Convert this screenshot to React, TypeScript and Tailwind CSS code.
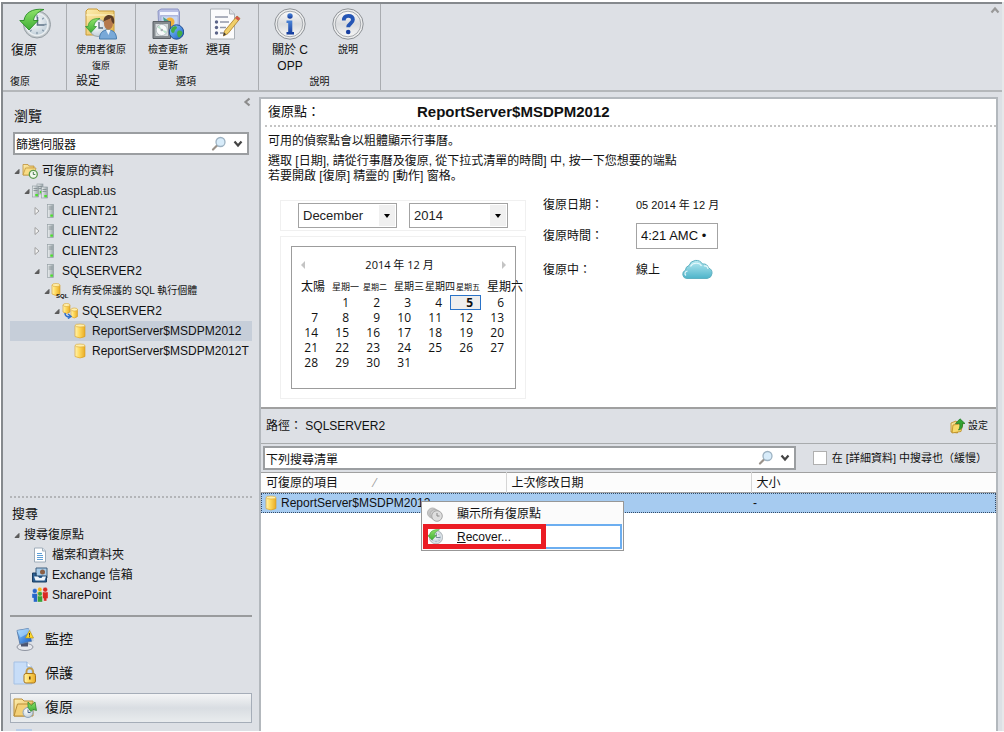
import React, { useState } from "react";

type IconProps = { className?: string };

function Defs() {
  return (
    <svg className="absolute h-0 w-0" aria-hidden="true">
      <defs>
        <linearGradient id="gold" x1="0" x2="1" y1="0" y2="0">
          <stop offset="0" stopColor="#fff3b4" />
          <stop offset="0.4" stopColor="#ffdc62" />
          <stop offset="1" stopColor="#e9ac26" />
        </linearGradient>
        <linearGradient id="folder" x1="0" x2="1" y1="0" y2="1">
          <stop offset="0" stopColor="#fdeeb0" />
          <stop offset="1" stopColor="#e2b248" />
        </linearGradient>
        <linearGradient id="green" x1="0" x2="0" y1="0" y2="1">
          <stop offset="0" stopColor="#8fe36a" />
          <stop offset="1" stopColor="#3fae36" />
        </linearGradient>
        <radialGradient id="face" cx="0.4" cy="0.35" r="0.7">
          <stop offset="0" stopColor="#ffffff" />
          <stop offset="1" stopColor="#bccbd6" />
        </radialGradient>
        <linearGradient id="disc" x1="0" x2="0" y1="0" y2="1">
          <stop offset="0" stopColor="#fbfbfb" />
          <stop offset="0.5" stopColor="#d9dbdd" />
          <stop offset="1" stopColor="#f7f7f7" />
        </linearGradient>
        <linearGradient id="blue" x1="0" x2="0" y1="0" y2="1">
          <stop offset="0" stopColor="#4c86d8" />
          <stop offset="1" stopColor="#12399b" />
        </linearGradient>
        <linearGradient id="screen" x1="0" x2="1" y1="0" y2="1">
          <stop offset="0" stopColor="#8fd0ff" />
          <stop offset="1" stopColor="#1458c4" />
        </linearGradient>
        <linearGradient id="steel" x1="0" x2="1" y1="0" y2="0">
          <stop offset="0" stopColor="#eef1f2" />
          <stop offset="1" stopColor="#98a3a8" />
        </linearGradient>
        <linearGradient id="sky" x1="0" x2="0" y1="0" y2="1">
          <stop offset="0" stopColor="#b9eaf2" />
          <stop offset="1" stopColor="#4db4ca" />
        </linearGradient>
      </defs>
    </svg>
  );
}

function ClockRestore({ className = "size-8" }: IconProps) {
  return (
    <svg viewBox="0 0 32 32" className={className} aria-hidden="true">
      <circle cx="18" cy="16.5" r="13.5" fill="#c3c9cd" stroke="#979fa5" />
      <circle cx="18" cy="16.5" r="11" fill="url(#face)" stroke="#e9eef1" strokeWidth="1.5" />
      <g stroke="#7f93a4" strokeWidth="1.3" strokeLinecap="round">
        <path d="M18 7.500v1.500M18 24.500v1M26 16.500h1M11.500 23l.7-.7M24.300 22.800l-.7-.7M24.300 10.200l-.7.7" />
        <path d="M18.500 9.500v7.500h6.500" fill="none" stroke="#5d7387" strokeWidth="1.600" />
      </g>
      <path d="M25 1.500C13 0 6 5 5 12.500H.8L10 22l9-9.500h-4.500C15 8 18 4 25 1.500z" fill="url(#green)" stroke="#2a8a28" strokeWidth=".9" />
    </svg>
  );
}

function UserFolder() {
  return (
    <svg viewBox="0 0 32 32" className="size-8" aria-hidden="true">
      <path d="M1 3l2-2h9l2 2h15v24H1z" fill="url(#folder)" stroke="#c99a35" />
      <path d="M1 7h28" stroke="#fff6cf" />
      <circle cx="13" cy="20" r="8.500" fill="url(#face)" stroke="#9ca7ae" />
      <path d="M14 14v6h4" fill="none" stroke="#54687a" strokeWidth="1.3" />
      <path d="M15 10.500C8 10 3.500 13 3 18.500H.5L6 24.500l5.500-6H9c.3-3.500 2-6 6-8z" fill="url(#green)" stroke="#2d8e2b" strokeWidth=".7" />
      <path d="M14.500 31c0-6 3-9 8.500-9s8.500 3 8.500 9z" fill="#79a9d8" stroke="#487cae" />
      <path d="M21 22l2.500 5 2-5z" fill="#eef5fb" />
      <ellipse cx="23.500" cy="15.500" rx="4.500" ry="6" fill="#b5784b" />
      <path d="M18.500 14c0-5 2.500-7 5.500-7 4 0 6 3 5 9-2-1-3-4-3-6-2 2-5 1-7.500 4z" fill="#5b3c28" />
    </svg>
  );
}

function CheckUpdates() {
  return (
    <svg viewBox="0 0 32 32" className="size-8" aria-hidden="true">
      <path d="M6 3l3-2h17l1.500 3v21H7z" fill="#b8bfe4" stroke="#8d95c4" />
      <path d="M8 4h18v3H8z" fill="#f4f6ff" />
      <path d="M9 8h17v14H9z" fill="#c8d6f2" stroke="#9aa5d2" strokeWidth=".6" />
      <circle cx="18" cy="14" r="4.500" fill="#f0b13c" />
      <path d="M11 9l6 4-4 5z" fill="#4aa08c" />
      <path d="M1 13.500h17.500v17H1z" fill="#858b90" stroke="#5a6065" />
      <path d="M3.500 16h12.500v12H3.500z" fill="#d5dadc" />
      <circle cx="9.800" cy="22" r="5.600" fill="#f7f9fa" stroke="#b5bdc2" />
      <path d="M9.800 22l-4.500-2.500 2-2zM9.800 22l3.500 3.500 1.500-2.500z" fill="#b9e3c9" />
      <circle cx="9.800" cy="22" r="1.300" fill="#a5adb2" />
      <circle cx="24.500" cy="24" r="7.200" fill="url(#screen)" stroke="#1d4a93" />
      <path d="M19.500 20c2-2.500 5.500-2 5.500-.5s-2.500 2-2.500 4-3.500 2-3.500-1zM26 23c2-1 4.500 0 4.500 2s-2.500 4.500-3.500 4.500-3-4.500-1-6.500z" fill="#43ad45" />
    </svg>
  );
}

function OptionsDoc() {
  return (
    <svg viewBox="0 0 32 32" className="size-8" aria-hidden="true">
      <path d="M1.500 1h19l5 5v25h-24z" fill="#fbfbfc" stroke="#aab0b6" />
      <path d="M20.500 1v5h5" fill="#dde1e5" stroke="#aab0b6" />
      <g fill="#5b6488">
        <circle cx="7.500" cy="14" r="1.700" />
        <circle cx="7.500" cy="19.500" r="1.700" />
        <circle cx="7.500" cy="25" r="1.700" />
      </g>
      <path d="M6 9h13M11 14h9M11 19.500h6M11 25h4" stroke="#9298a8" strokeWidth="1.500" />
      <path d="M28 8l3 2.500L19 25.500l-4.500 2.500 1-5z" fill="#f0cf6a" stroke="#a87a23" strokeWidth=".8" />
      <path d="M28 8l3 2.500-1.800 2.200-3-2.500z" fill="#d4574c" />
      <path d="M15 24.500l-.8 3.500 3-1.700z" fill="#3f3b36" />
    </svg>
  );
}

function RoundGlyph({ kind }: { kind: "info" | "help" }) {
  return (
    <svg viewBox="0 0 32 32" className="size-8" aria-hidden="true">
      <circle cx="16" cy="16" r="15.200" fill="#eceded" stroke="#8d9196" />
      <circle cx="16" cy="16" r="12.800" fill="url(#disc)" stroke="#a6aaae" />
      {kind === "info" ? (
        <>
          <circle cx="16" cy="8" r="2.700" fill="url(#blue)" />
          <path d="M12.500 12.500h5.800v11.500h1.700v2.500h-7.500V24h1.700v-9h-1.700z" fill="url(#blue)" />
        </>
      ) : (
        <>
          <path d="M11.800 12.500c0-3.200 1.900-4.700 4.500-4.700 2.800 0 4.600 1.500 4.600 4 0 3.700-4.700 3.700-4.700 7.500" fill="none" stroke="#2556b5" strokeWidth="3.800" />
          <circle cx="16.200" cy="24" r="2.300" fill="#173fa0" />
        </>
      )}
    </svg>
  );
}

function Magnifier() {
  return (
    <svg viewBox="0 0 16 16" className="size-4 shrink-0" aria-hidden="true">
      <path d="M6 9.500L2 13.500" stroke="#9a928a" strokeWidth="2.200" strokeLinecap="round" />
      <circle cx="9.500" cy="6" r="4.500" fill="#d8ecfa" stroke="#9db2c2" strokeWidth="1.300" />
    </svg>
  );
}

function Chevron({ className = "" }: IconProps) {
  return (
    <svg viewBox="0 0 10 8" className={"h-2 w-2.5 shrink-0 " + className} aria-hidden="true">
      <path d="M1.500 1.500L5 5.500l3.500-4" fill="none" stroke="currentColor" strokeWidth="2.200" />
    </svg>
  );
}

function FolderClock() {
  return (
    <svg viewBox="0 0 16 16" className="size-4" aria-hidden="true">
      <path d="M1 1.500h5l1 1.500h5v9H1z" fill="url(#folder)" stroke="#bf9238" strokeWidth=".8" />
      <path d="M3.500 5H14l-2 7H1z" fill="#f8dc86" stroke="#bf9238" strokeWidth=".7" />
      <circle cx="11.300" cy="11.300" r="4" fill="#f1f7ef" stroke="#5a9a4b" strokeWidth="1.300" />
      <path d="M11.300 9v2.500h2" fill="none" stroke="#4b7c50" />
    </svg>
  );
}

function ServerShape({ x, y, h }: { x: number; y: number; h: number }) {
  return (
    <g>
      <rect x={x} y={y} width="6" height={h} fill="url(#steel)" stroke="#8d989d" strokeWidth=".6" />
      <path d={`M${x + 1} ${y + 2.5}h4M${x + 1} ${y + 4.5}h4`} stroke="#7d888d" strokeWidth=".8" />
      <rect x={x + 2.8} y={y + h - 3} width="2.600" height="2.200" fill="#4be02b" />
    </g>
  );
}

function ServerIcon() {
  return (
    <svg viewBox="0 0 16 16" className="size-4" aria-hidden="true">
      <ServerShape x={5.5} y={1.5} h={13} />
    </svg>
  );
}

function DomainIcon() {
  return (
    <svg viewBox="0 0 16 16" className="size-4" aria-hidden="true">
      <ServerShape x={5} y={1} h={10} />
      <ServerShape x={0.5} y={3} h={11} />
      <ServerShape x={9.5} y={4} h={11} />
    </svg>
  );
}

function Cylinder({ x, y, w, h }: { x: number; y: number; w: number; h: number }) {
  return (
    <g>
      <path d={`M${x} ${y + 1.5}v${h - 3}q${w / 2} 3 ${w} 0v-${h - 3}z`} fill="url(#gold)" stroke="#d39a22" strokeWidth=".6" />
      <ellipse cx={x + w / 2} cy={y + 1.5} rx={w / 2} ry="1.500" fill="#fff0ae" stroke="#d9a430" strokeWidth=".6" />
    </g>
  );
}

function DbIcon() {
  return (
    <svg viewBox="0 0 16 16" className="size-4" aria-hidden="true">
      <Cylinder x={3} y={1} w={10} h={14} />
    </svg>
  );
}

function SqlIcon() {
  return (
    <svg viewBox="0 0 16 16" className="size-4 overflow-visible" aria-hidden="true">
      <Cylinder x={0} y={0.5} w={8} h={12} />
      <text x="4" y="15" fontSize="6" fontWeight="bold" fontFamily="Liberation Sans" fill="#111">SQL</text>
    </svg>
  );
}

function DbPairIcon() {
  return (
    <svg viewBox="0 0 16 16" className="size-4" aria-hidden="true">
      <Cylinder x={1} y={0.5} w={7} h={10} />
      <Cylinder x={9} y={5} w={6.5} h={10} />
      <path d="M3 10c0 3 2 4 5 4M6 11l3 2.500-3 2" fill="none" stroke="#2d6fce" strokeWidth="1.500" />
    </svg>
  );
}

function FileIcon() {
  return (
    <svg viewBox="0 0 16 16" className="size-4" aria-hidden="true">
      <path d="M2.500 1h8l3 3v11h-11z" fill="#fff" stroke="#9eacb9" />
      <path d="M10.500 1v3h3" fill="#dbe7f1" stroke="#9eacb9" />
      <path d="M5 6.500h5M5 8.500h6M5 10.500h6M5 12.500h6" stroke="#5f9fd6" />
    </svg>
  );
}

function MailboxIcon() {
  return (
    <svg viewBox="0 0 16 16" className="size-4" aria-hidden="true">
      <path d="M4 1h11v10H4z" fill="#a9cdea" stroke="#41617e" />
      <circle cx="10.500" cy="5" r="2.500" fill="#8b5e43" />
      <path d="M7 11c0-3 7-3 7 0z" fill="#3a6ba6" />
      <path d="M.5 6h3.500v3h10.500v6H.5z" fill="#2b5f93" stroke="#1b3e63" />
      <path d="M2 9.500h4l1.500 1.500h2l1-1.500h3.500l-1.500 4h-9z" fill="#eef4fa" />
    </svg>
  );
}

function SharePointIcon() {
  return (
    <svg viewBox="0 0 16 16" className="size-4" aria-hidden="true">
      <g stroke="#fff" strokeWidth=".3">
        <path d="M5 4.500h5v7H5z" fill="#f2b21b" />
        <circle cx="7.800" cy="2.400" r="2.200" fill="#f2b21b" />
        <path d="M10.500 5H16v6.500h-1.300V14h-3v-2.500h-1.200z" fill="#d92a23" />
        <circle cx="13.200" cy="2.700" r="2.400" fill="#d92a23" />
        <path d="M0 6.500h5.500v8.500H1.500v-4H0z" fill="#2766c9" />
        <circle cx="2.800" cy="4" r="2.400" fill="#2766c9" />
        <path d="M5.500 9h5v6h-5z" fill="#3aa23a" />
        <circle cx="8" cy="6.800" r="2.300" fill="#3aa23a" />
      </g>
    </svg>
  );
}

function MonitorNav() {
  return (
    <svg viewBox="0 0 24 24" className="size-6" aria-hidden="true">
      <ellipse cx="12" cy="20" rx="8" ry="3.500" fill="#e4e6ec" stroke="#8f94a0" />
      <path d="M8 15h7v4.500H8z" fill="#4c5470" />
      <path d="M4 3.500L15.500 1.500 19 14 7 17z" fill="url(#screen)" stroke="#5b7fae" />
      <path d="M4 3.500L15.500 1.500l1 4-9 5z" fill="#b7e0ff" opacity=".6" />
      <path d="M15.500 1.500l2 .8L21 14l-2 .5z" fill="#c3d0de" />
      <path d="M16.500 3.500L20.500 11h-8z" fill="#ffd92e" stroke="#b48a00" strokeWidth=".6" />
      <path d="M16.500 6v2.600M16.500 9.300v.8" stroke="#222" strokeWidth=".9" />
    </svg>
  );
}

function ProtectNav() {
  return (
    <svg viewBox="0 0 24 24" className="size-6" aria-hidden="true">
      <path d="M1 1h13l5 5v17H1z" fill="#c7ddf8" stroke="#a5c1e4" />
      <path d="M14 1v5h5" fill="#fff" stroke="#8eb0da" />
      <path d="M13.500 13v-2.500a3.300 3.300 0 016.600 0V13" fill="none" stroke="#c39a45" strokeWidth="1.900" />
      <rect x="11" y="12.500" width="11.500" height="9.500" rx="2" fill="url(#gold)" stroke="#a9751b" />
      <path d="M16.800 15.500v3" stroke="#6a4510" strokeWidth="1.600" />
    </svg>
  );
}

function RecoverNav() {
  return (
    <svg viewBox="0 0 24 24" className="size-6" aria-hidden="true">
      <path d="M1 4h8l2 2h9v15H1z" fill="url(#folder)" stroke="#b98e38" />
      <path d="M4.500 9H20l-3.500 12H1z" fill="#f3d078" stroke="#b98e38" />
      <circle cx="15" cy="17.500" r="5" fill="url(#face)" stroke="#8ea4bd" />
      <path d="M15 14.500v3h2.500" fill="none" stroke="#48648a" />
      <path d="M15 7l3 3.500L22 7l1.500 8.500-3.500-1-2 2-3-4z" fill="url(#green)" stroke="#257f25" strokeWidth=".7" />
    </svg>
  );
}

function FolderUp() {
  return (
    <svg viewBox="0 0 16 16" className="size-4" aria-hidden="true">
      <path d="M1 5l5-2 1.500 1.500V15L1 14z" fill="url(#folder)" stroke="#b78a25" strokeWidth=".8" />
      <path d="M3 7l10-1.500-2 8L2 15z" fill="#f8da6b" stroke="#b78a25" strokeWidth=".8" />
      <path d="M10 .8L15 5.500h-2.500c.3 4-1 6-4 6.500 1.500-2 1.500-4 1.200-6.500H5.500z" fill="#35a332" stroke="#1c7421" strokeWidth=".7" />
    </svg>
  );
}

function PointsIcon() {
  return (
    <svg viewBox="0 0 16 16" className="size-4" aria-hidden="true">
      <circle cx="5.500" cy="7" r="5" fill="#c8c8c8" stroke="#b5b5b5" />
      <circle cx="8" cy="8.500" r="5" fill="#d0d0d0" stroke="#b0b0b0" />
      <circle cx="10" cy="10" r="5.300" fill="#dedede" stroke="#a5a5a5" />
      <path d="M10 7v3h2.500" fill="none" stroke="#888" />
    </svg>
  );
}

function Cloud() {
  return (
    <svg viewBox="0 0 34 22" className="h-[22px] w-[34px]" aria-hidden="true">
      <path d="M7 19.500h20a5.500 5.500 0 001.500-10.600A5.500 5.500 0 0022.500 5 7.500 7.500 0 009 6.500a5 5 0 00-3.500 4.700A4.300 4.300 0 007 19.500z" fill="url(#sky)" stroke="#5fb1c1" />
      <path d="M6 16.500c-2-1.500-1-4 1.500-4.500M10.500 7.500c2-4 9-4.500 11-.5M24 7c3-.5 4 1.500 4 3" fill="none" stroke="#e5f8fb" strokeWidth="1.200" />
    </svg>
  );
}

function RibbonItem({ icon, lines, size = "text-[10px]", width, align = "items-center" }: {
  icon: React.ReactNode; lines: { text: string; size?: string }[]; size?: string; width: string; align?: string;
}) {
  return (
    <button type="button" className={"flex flex-col whitespace-nowrap " + width + " " + align}>
      <span className="self-center">{icon}</span>
      <span className={"mt-0.5 flex flex-col items-center leading-4 " + size}>
        {lines.map((l) => (
          <span key={l.text} className={"leading-4 " + (l.size ?? "")}>{l.text}</span>
        ))}
      </span>
    </button>
  );
}

function RibbonGroup({ caption, captionClass, width, children }: {
  caption: string; captionClass: string; width: string; children: React.ReactNode;
}) {
  return (
    <section className={"flex flex-col border-r border-[#a9acb0] pt-1 " + width}>
      <div className="flex h-[66px]">{children}</div>
      <h2 className={"leading-[15px] " + captionClass}>{caption}</h2>
    </section>
  );
}

const indent = ["pl-0.5", "pl-3", "pl-[22px]", "pl-8", "pl-[42px]", "pl-[52px]"];

type Node = { level: number; label: string; icon?: React.ReactNode; state?: "open" | "closed"; small?: boolean };

const tree: Node[] = [
  { level: 0, label: "可復原的資料", icon: <FolderClock />, state: "open" },
  { level: 1, label: "CaspLab.us", icon: <DomainIcon />, state: "open" },
  { level: 2, label: "CLIENT21", icon: <ServerIcon />, state: "closed" },
  { level: 2, label: "CLIENT22", icon: <ServerIcon />, state: "closed" },
  { level: 2, label: "CLIENT23", icon: <ServerIcon />, state: "closed" },
  { level: 2, label: "SQLSERVER2", icon: <ServerIcon />, state: "open" },
  { level: 3, label: "所有受保護的 SQL 執行個體", icon: <SqlIcon />, state: "open", small: true },
  { level: 4, label: "SQLSERVER2", icon: <DbPairIcon />, state: "open" },
  { level: 5, label: "ReportServer$MSDPM2012", icon: <DbIcon /> },
  { level: 5, label: "ReportServer$MSDPM2012T", icon: <DbIcon /> },
];

const searches: Node[] = [
  { level: 0, label: "搜尋復原點", state: "open" },
  { level: 1, label: "檔案和資料夾", icon: <FileIcon /> },
  { level: 1, label: "Exchange 信箱", icon: <MailboxIcon /> },
  { level: 1, label: "SharePoint", icon: <SharePointIcon /> },
];

function TreeRow({ node, selected, onSelect }: { node: Node; selected?: boolean; onSelect?: () => void }) {
  return (
    <li>
      <button
        type="button"
        onClick={onSelect}
        className={"flex h-5 w-full items-center whitespace-nowrap text-left " + indent[node.level] + (selected ? " bg-[#c6ced9]" : "") + (node.small ? " text-[10px]" : "")}
      >
        <svg viewBox="0 0 10 10" className="size-2.5 shrink-0" aria-hidden="true">
          {node.state === "open" && <path d="M7 3.500v4H3z" fill="#5a5a5a" stroke="#5a5a5a" />}
          {node.state === "closed" && <path d="M3 1.500L7 5 3 8.500z" fill="#f4f4f4" stroke="#a0a0a0" />}
        </svg>
        {node.icon && <span className="mr-1 shrink-0">{node.icon}</span>}
        <span className={node.icon ? "" : "ml-0.5"}>{node.label}</span>
      </button>
    </li>
  );
}

function SearchField({ label, id, className = "" }: { label: string; id: string; className?: string }) {
  return (
    <div className={"flex items-center border-2 border-[#9b9ea1] bg-white pr-1 " + className}>
      <input id={id} aria-label={label} defaultValue={label} className="h-full min-w-0 flex-1 px-px text-xs outline-none" />
      <Magnifier />
      <Chevron className="ml-1.5 text-[#444]" />
    </div>
  );
}

function Combo({ label, options }: { label: string; options: string[] }) {
  return (
    <div className="relative h-[25px] w-[99px]">
      <select aria-label={label} className="h-full w-full appearance-none border border-[#a3a3a3] bg-white pl-1 text-[13px] text-[#222]">
        {options.map((o) => <option key={o}>{o}</option>)}
      </select>
      <span className="pointer-events-none absolute inset-y-0.5 right-0.5 flex w-4 items-center justify-center bg-[#f0f0f0]">
        <svg viewBox="0 0 6 4" className="h-1 w-1.5"><path d="M0 0h6L3 4z" /></svg>
      </span>
    </div>
  );
}

const weekdays = [
  { name: "太陽", size: "text-xs" },
  { name: "星期一", size: "text-[9px]" },
  { name: "星期二", size: "text-[8px]" },
  { name: "星期三", size: "text-[10px]" },
  { name: "星期四", size: "text-[10px]" },
  { name: "星期五", size: "text-[8px]" },
  { name: "星期六", size: "text-xs" },
];

const weeks = Array.from({ length: 5 }, (_, w) =>
  Array.from({ length: 7 }, (_, d) => {
    const day = w * 7 + d;
    return day >= 1 && day <= 31 ? day : null;
  }),
);

function Calendar() {
  return (
    <div className="h-[143px] w-[225px] border border-[#9c9c9c] pl-[3px] pt-2.5">
      <div className="flex h-4 items-center justify-between pl-[5px] pr-2 text-xs">
        <button type="button" aria-label="上個月"><svg viewBox="0 0 6 8" className="h-2 w-1.5"><path d="M5 0v8L1 4z" fill="#c4c4c4" /></svg></button>
        <span className="pr-2 font-['Open_Sans','Noto_Sans_CJK_TC',sans-serif] text-[11px]">2014 年 12 月</span>
        <button type="button" aria-label="下個月"><svg viewBox="0 0 6 8" className="h-2 w-1.5"><path d="M1 0v8l4-4z" fill="#c4c4c4" /></svg></button>
      </div>
      <table className="mt-1 w-[217px] table-fixed border-collapse font-['Open_Sans','Noto_Sans_CJK_TC',sans-serif] text-xs leading-[15px]">
        <thead>
          <tr className="h-[18px]">
            {weekdays.map((d) => (
              <th key={d.name} scope="col" className={"whitespace-nowrap p-0 pl-1.5 text-left font-normal leading-[15px] " + d.size}>{d.name}</th>
            ))}
          </tr>
        </thead>
        <tbody>
          {weeks.map((week, i) => (
            <tr key={i} className="h-[15px]">
              {week.map((day, j) => (
                <td key={j} className={"h-[15px] p-0 pr-2 text-right " + (day === 5 ? "bg-[#eeeeee] font-bold ring-1 ring-[#2a73c8] ring-inset" : "")}>{day}</td>
              ))}
            </tr>
          ))}
        </tbody>
      </table>
    </div>
  );
}

function NavButton({ icon, label, active }: { icon: React.ReactNode; label: string; active?: boolean }) {
  return (
    <li className={"h-[30px] shrink-0 border " + (active ? "border-[#a5adb8] bg-linear-to-b from-[#f4f5f6] via-[#d9dde2] to-[#e9ecee]" : "border-transparent")}>
      <button type="button" className="flex h-full w-full items-center gap-2 pb-0.5 pl-0.5 text-sm">
        {icon}
        {label}
      </button>
    </li>
  );
}

function Stop() {
  return <span className="font-['Noto_Sans_CJK_SC',sans-serif] leading-none" lang="zh-Hans">。</span>;
}

export default function App() {
  const [selected, setSelected] = useState(8);
  return (
    <div lang="zh-Hant" className="h-screen bg-[#e6e8ea] font-['Liberation_Sans','Noto_Sans_CJK_TC',sans-serif] text-xs text-[#111]">
      <Defs />
      <div className="flex h-full flex-col border-b border-l border-t-2 border-white pr-0.5">
        <div className="flex min-h-0 flex-1 flex-col border-l-2 border-t-2 border-[#85898d] bg-[#dde0e5]">
          <header className="flex h-[88px] shrink-0 border-b-2 border-[#b4b7ba]">
            <RibbonGroup caption="復原" captionClass="pl-[7px] text-[10px]" width="w-16">
              <RibbonItem icon={<ClockRestore />} lines={[{ text: "復原" }]} size="ml-2 text-[13px]" width="w-[63px]" align="items-start" />
            </RibbonGroup>
            <RibbonGroup caption="設定" captionClass="pl-[9px] text-xs" width="w-[69px]">
              <RibbonItem icon={<UserFolder />} lines={[{ text: "使用者復原" }, { text: "復原", size: "text-[9px]" }]} width="w-[68px]" />
            </RibbonGroup>
            <RibbonGroup caption="選項" captionClass="pl-10 text-[10px]" width="w-[123px]">
              <RibbonItem icon={<CheckUpdates />} lines={[{ text: "檢查更新" }, { text: "更新" }]} width="ml-1 w-14" />
              <RibbonItem icon={<OptionsDoc />} lines={[{ text: "選項" }]} size="text-xs" width="ml-2.5 w-[38px]" align="items-start" />
            </RibbonGroup>
            <RibbonGroup caption="說明" captionClass="text-center text-[10px]" width="w-[122px]">
              <RibbonItem icon={<RoundGlyph kind="info" />} lines={[{ text: "關於 C" }, { text: "OPP" }]} size="text-xs" width="ml-0.5 w-[58px]" />
              <RibbonItem icon={<RoundGlyph kind="help" />} lines={[{ text: "說明" }]} width="w-[58px]" />
            </RibbonGroup>
            <button type="button" aria-label="最小化功能區" className="ml-auto mr-0.5 mt-0.5 self-start text-[#999]">
              <Chevron className="rotate-180" />
            </button>
          </header>

          <div className="flex min-h-0 flex-1">
            <aside className="flex w-[249px] shrink-0 flex-col overflow-hidden pl-[7px]">
              <div className="flex h-10 items-start justify-between pt-1.5">
                <h2 className="pl-1 pt-2.5 text-sm leading-4">瀏覽</h2>
                <button type="button" aria-label="收合" className="text-[#8c8c8c]">
                  <Chevron className="rotate-90" />
                </button>
              </div>
              <SearchField id="server-filter" label="篩選伺服器" className="ml-[3px] mr-[3px] h-[23px] shrink-0" />
              <ul className="mt-1.5 flex-1">
                {tree.map((n, i) => (
                  <TreeRow key={i} node={n} selected={i === selected} onSelect={() => setSelected(i)} />
                ))}
              </ul>
              <section className="shrink-0 border-t-2 border-dotted border-[#b3b5b8] pt-[7px]">
                <h2 className="mb-0.5 pl-0.5 text-[13px] leading-[18px]">搜尋</h2>
                <ul>{searches.map((n) => <TreeRow key={n.label} node={n} />)}</ul>
              </section>
              <ul className="mt-2.5 flex h-[116px] shrink-0 flex-col gap-1 overflow-hidden border-t-2 border-[#999b9d] pt-2">
                <NavButton icon={<MonitorNav />} label="監控" />
                <NavButton icon={<ProtectNav />} label="保護" />
                <NavButton icon={<RecoverNav />} label="復原" active />
                <li className="ml-1.5 mt-0.5 h-6 w-4 shrink-0 bg-[#b9cde8]" />
              </ul>
            </aside>

            <main className="ml-[7px] mr-1 mt-[5px] flex min-w-0 flex-1 flex-col border-x-2 border-t-2 border-[#b3b8bd] bg-white">
              <section className="border-b-2 border-[#a0a0a0] pb-2">
                <div className="ml-1 flex h-7 items-center border-b-2 border-dotted border-[#c4c4c4] pl-[3px]">
                  <span className="w-[149px] text-[13px]">復原點：</span>
                  <h1 className="text-[15px] font-bold">ReportServer$MSDPM2012</h1>
                </div>
                <div className="pl-[7px] pt-[7px] leading-[15px]">
                  <p className="h-[15px]">可用的偵察點會以粗體顯示行事曆<Stop /></p>
                  <p className="mt-[5px]">選取 [日期], 請從行事曆及復原, 從下拉式清單的時間] 中, 按一下您想要的端點</p>
                  <p className="h-[15px]">若要開啟 [復原] 精靈的 [動作] 窗格<Stop /></p>
                </div>
                <div className="mt-[11px] flex items-start gap-[17px] pl-[19px]">
                  <div className="flex w-[246px] flex-col gap-[5px] pt-[5px]">
                    <div className="flex h-[31px] items-center gap-3 border border-[#f0f0f0] pl-[17px]">
                      <Combo label="月份" options={["December"]} />
                      <Combo label="年份" options={["2014"]} />
                    </div>
                    <div className="h-[163px] border border-[#f0f0f0] pl-2.5 pt-[9px]">
                      <Calendar />
                    </div>
                  </div>
                  <dl className="grid grid-cols-[93px_auto] items-center gap-y-2">
                    <dt className="h-5 leading-5">復原日期：</dt>
                    <dd className="text-[11px]">05 2014 年 12 月</dd>
                    <dt><label htmlFor="time">復原時間：</label></dt>
                    <dd>
                      <select id="time" className="h-[26px] w-[82px] appearance-none border border-[#a3a3a3] bg-white pl-1 text-[13px]">
                        <option>4:21 AMC •</option>
                      </select>
                    </dd>
                    <dt>復原中：</dt>
                    <dd className="flex h-[26px] items-center gap-5">線上 <Cloud /></dd>
                  </dl>
                </div>
              </section>

              <div className="flex h-[34px] shrink-0 items-center justify-between bg-[#dde0e5] pl-[5px] pr-2">
                <p className="whitespace-pre">路徑： SQLSERVER2</p>
                <button type="button" className="flex items-center gap-0.5 text-[10px]"><FolderUp />設定</button>
              </div>
              <div className="flex h-[29px] shrink-0 items-center border-t border-[#a8abad] bg-[#dde0e5] pl-0.5 pr-[9px]">
                <SearchField id="list-search" label="下列搜尋清單" className="h-6 min-w-0 flex-1" />
                <label className="ml-[17px] flex shrink-0 items-center gap-[5px] whitespace-nowrap text-[11px]">
                  <input type="checkbox" className="size-3.5 appearance-none border border-[#b0b0b0] bg-white checked:bg-[#4a7ebb]" />
                  在 [詳細資料] 中搜尋也（緩慢）
                </label>
              </div>
              <div className="relative min-h-0 flex-1">
                <table className="w-full table-fixed border-collapse text-left">
                  <colgroup><col className="w-1/3" /><col className="w-1/3" /><col className="w-1/3" /></colgroup>
                  <thead>
                    <tr className="h-5 border-y border-[#a0a0a0] bg-[#fcfcfc]">
                      <th scope="col" className="border-r border-[#d5d5d5] p-0 pl-[5px] font-normal leading-[18px]">
                        可復原的項目<span className="ml-9 text-[#999]">⁄</span>
                      </th>
                      <th scope="col" className="border-r border-[#d5d5d5] p-0 pl-[5px] font-normal leading-[18px]">上次修改日期</th>
                      <th scope="col" className="p-0 pl-[5px] font-normal leading-[18px]">大小</th>
                    </tr>
                  </thead>
                  <tbody>
                    <tr className="h-5 bg-[#a6cbf0] outline-1 outline-dotted -outline-offset-1 outline-[#334a66]">
                      <td className="p-0 pl-0.5">
                        <span className="flex items-center gap-0.5 whitespace-nowrap"><DbIcon />ReportServer$MSDPM2012</span>
                      </td>
                      <td className="p-0" />
                      <td className="p-0 pl-0.5">-</td>
                    </tr>
                  </tbody>
                </table>
                <ul role="menu" className="absolute left-40 top-[29px] w-[203px] border border-[#979797] bg-[#fbfbfb] p-px">
                  <li role="none">
                    <button type="button" role="menuitem" className="flex h-[21px] w-full items-center gap-3.5 pl-1"><PointsIcon />顯示所有復原點</button>
                  </li>
                  <li role="none" className="relative">
                    <button type="button" role="menuitem" className="flex h-[25px] w-full items-center gap-3.5 border-2 border-[#6caef0] bg-white pl-0.5">
                      <ClockRestore className="size-4" />
                      <span><u>R</u>ecover...</span>
                    </button>
                    <span className="pointer-events-none absolute inset-y-0 left-0 w-[123px] border-[5px] border-[#eb1c24]" />
                  </li>
                </ul>
              </div>
            </main>
          </div>
        </div>
      </div>
    </div>
  );
}
